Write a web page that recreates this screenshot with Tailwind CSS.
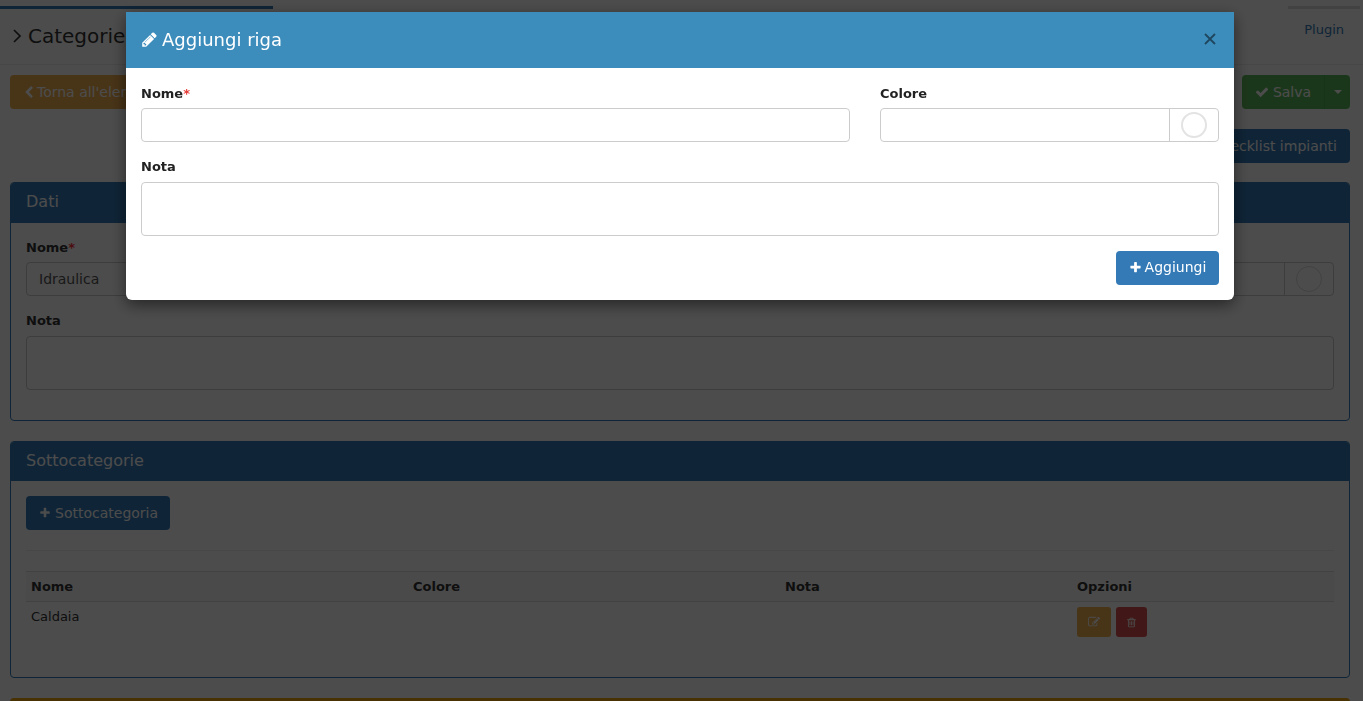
<!DOCTYPE html>
<html>

<head>
    <meta charset="UTF-8">
    <meta name="viewport" content="width=device-width, initial-scale=1.0">
    <script src="https://cdn.jsdelivr.net/npm/@tailwindcss/browser@4"></script>
</head>

<body class="h-[701px] overflow-hidden bg-white font-['DejaVu_Sans',sans-serif] text-[13px] text-[#333]">
    <!-- page behind the modal -->
    <div class="h-[701px] overflow-hidden">
        <div class="flex h-[10px] justify-between pt-[6px]">
            <div class="h-[3px] w-[273px] bg-[#337ab7]"></div>
            <div class="mr-[3px] h-[3px] w-[72px] bg-[#ddd]"></div>
        </div>
        <div class="flex h-[55px] items-center justify-between border-b border-[#eee] pl-[12px] pr-[19px]">
            <h1 class="mb-[2px] flex items-center gap-[5px] text-[20px] font-normal">
                <svg width="11" height="16" viewBox="0 0 11 16" fill="none" stroke="#333" stroke-width="1.7"><path d="M2 2l6 6-6 6" /></svg>
                Categorie
            </h1>
            <a class="mb-[14px] text-[13px] text-[#337ab7]">Plugin</a>
        </div>

        <div class="pl-[10px] pr-[13px]">
            <div class="mt-[10px] flex h-[34px] justify-between">
                <button class="flex items-center gap-[3px] rounded-[4px] bg-[#f0ad4e] pl-[13px] pr-[13px] text-[14px] text-white">
                    <svg class="h-[13px] w-[11px]" viewBox="200 0 1300 1792" fill="currentColor"><path d="M1427 301l-531 531 531 531q19 19 19 45t-19 45l-166 166q-19 19-45 19t-45-19l-742-742q-19-19-19-45t19-45l742-742q19-19 45-19t45 19l166 166q19 19 19 45t-19 45z" /></svg>
                    Torna all'elenco
                </button>
                <div class="flex h-[34px] w-[108px] rounded-[4px] bg-[#5cb85c] text-[14px] text-white">
                    <div class="flex flex-1 items-center justify-center gap-[4px] border-r border-[#4cae4c]">
                        <svg class="h-[14px] w-[14px]" viewBox="0 0 1792 1792" fill="currentColor"><path d="M1671 566q0 40-28 68l-724 724-136 136q-28 28-68 28t-68-28l-136-136-362-362q-28-28-28-68t28-68l136-136q28-28 68-28t68 28l294 295 656-657q28-28 68-28t68 28l136 136q28 28 28 68z" /></svg>
                        Salva
                    </div>
                    <div class="flex w-[25px] items-center justify-center">
                        <span class="border-x-[4px] border-t-[4px] border-x-transparent border-t-white"></span>
                    </div>
                </div>
            </div>
            <div class="mt-[20px] flex justify-end">
                <button class="h-[34px] w-[280px] rounded-[4px] bg-[#337ab7] pr-[13px] text-right text-[14px] text-white">Checklist impianti</button>
            </div>

            <section class="mt-[19px] h-[239px] rounded-[4px] border border-[#337ab7]">
                <h2 class="flex h-[40px] items-center rounded-t-[3px] bg-[#337ab7] px-[15px] pb-[2px] text-[16px] font-normal text-white">Dati</h2>
                <div class="p-[15px]">
                    <div class="grid grid-cols-[862px_416px] gap-x-[30px]">
                        <div>
                            <label class="block h-[24px] font-bold">Nome<span class="text-red-500">*</span></label>
                            <input class="h-[34px] w-full rounded-[4px] border border-[#ccc] bg-transparent px-[12px] text-[14px] text-[#555]" value="Idraulica">
                        </div>
                        <div>
                            <label class="block h-[24px] font-bold">Colore</label>
                            <div class="flex h-[34px] rounded-[4px] border border-[#ccc]">
                                <div class="flex-1 border-r border-[#ccc]"></div>
                                <div class="flex w-[48px] items-center justify-center"><span class="h-[26px] w-[26px] rounded-full border border-[#ddd]"></span></div>
                            </div>
                        </div>
                    </div>
                    <label class="mt-[15px] block h-[25px] font-bold">Nota</label>
                    <div class="h-[54px] rounded-[4px] border border-[#ccc]"></div>
                </div>
            </section>

            <section class="mt-[20px] h-[237px] rounded-[4px] border border-[#337ab7]">
                <h2 class="flex h-[39px] items-center rounded-t-[3px] bg-[#337ab7] px-[15px] pb-[2px] text-[16px] font-normal text-white">Sottocategorie</h2>
                <div class="px-[15px] pt-[15px]">
                    <button class="flex h-[34px] w-[144px] items-center gap-[4px] rounded-[4px] bg-[#337ab7] pl-[13px] text-[14px] text-white">
                        <svg class="h-[12px] w-[12px]" viewBox="0 0 1792 1792" fill="currentColor"><path d="M1600 736v192q0 40-28 68t-68 28h-416v416q0 40-28 68t-68 28h-192q-40 0-68-28t-28-68v-416h-416q-40 0-68-28t-28-68v-192q0-40 28-68t68-28h416v-416q0-40 28-68t68-28h192q40 0 68 28t28 68v416h416q40 0 68 28t28 68z" /></svg>
                        Sottocategoria
                    </button>
                    <hr class="mt-[20px] border-[#eee]">
                    <table class="mt-[20px] w-full table-fixed border-t border-[#ddd]">
                        <thead>
                            <tr class="h-[30px] border-b border-[#ddd] bg-[#f9f9f9] text-left">
                                <th class="w-[382px] px-[5px] font-bold">Nome</th>
                                <th class="w-[372px] px-[5px] font-bold">Colore</th>
                                <th class="w-[292px] px-[5px] font-bold">Nota</th>
                                <th class="px-[5px] font-bold">Opzioni</th>
                            </tr>
                        </thead>
                        <tbody>
                            <tr>
                                <td class="px-[5px] pt-[5px] align-top">Caldaia</td>
                                <td></td>
                                <td></td>
                                <td class="px-[5px] pt-[5px]">
                                    <div class="flex gap-[5px]">
                                        <button class="flex h-[30px] w-[34px] items-center justify-center rounded-[3px] bg-[#f0ad4e] text-white">
                                            <svg class="h-[12px] w-[12px]" viewBox="0 0 1792 1792" fill="currentColor"><path d="M888 1184l116-116-152-152-116 116v56h96v96h56zm440-720q-16-16-33 1l-350 350q-17 17-1 33t33-1l350-350q17-17 1-33zm80 594v190q0 119-84.5 203.5t-203.5 84.5h-832q-119 0-203.5-84.5t-84.5-203.5v-832q0-119 84.5-203.5t203.5-84.5h832q63 0 117 25 15 7 18 23 3 17-9 29l-49 49q-14 14-32 8-23-6-45-6h-832q-66 0-113 47t-47 113v832q0 66 47 113t113 47h832q66 0 113-47t47-113v-126q0-13 9-22l64-64q15-15 35-7t20 29zm-96-738l288 288-672 672h-288v-288zm444 132l-92 92-288-288 92-92q28-28 68-28t68 28l152 152q28 28 28 68t-28 68z" /></svg>
                                        </button>
                                        <button class="flex h-[30px] w-[31px] items-center justify-center rounded-[3px] bg-[#d9534f] text-white">
                                            <svg class="h-[11px] w-[11px]" viewBox="0 0 1792 1792" fill="currentColor"><path d="M704 736v576q0 14-9 23t-23 9h-64q-14 0-23-9t-9-23v-576q0-14 9-23t23-9h64q14 0 23 9t9 23zm256 0v576q0 14-9 23t-23 9h-64q-14 0-23-9t-9-23v-576q0-14 9-23t23-9h64q14 0 23 9t9 23zm256 0v576q0 14-9 23t-23 9h-64q-14 0-23-9t-9-23v-576q0-14 9-23t23-9h64q14 0 23 9t9 23zm128 724v-948h-896v948q0 22 7 40.5t14.5 27 10.5 8.5h832q3 0 10.5-8.5t14.5-27 7-40.5zm-672-1076h448l-48-117q-7-9-17-11h-317q-10 2-17 11zm928 32v64q0 14-9 23t-23 9h-96v948q0 83-47 143.5t-113 60.5h-832q-66 0-113-58.5t-47-141.5v-952h-96q-14 0-23-9t-9-23v-64q0-14 9-23t23-9h309l70-167q15-37 54-63t79-26h320q40 0 79 26t54 63l70 167h309q14 0 23 9t9 23z" /></svg>
                                        </button>
                                    </div>
                                </td>
                            </tr>
                        </tbody>
                    </table>
                </div>
            </section>

            <section class="mt-[20px] h-[40px] rounded-t-[4px] bg-[#f0a30a]"></section>
        </div>
    </div>

    <!-- modal backdrop -->
    <div class="fixed inset-0 bg-black/70"></div>

    <!-- modal -->
    <div class="fixed left-[126px] top-[12px] w-[1108px] overflow-hidden rounded-b-[6px] bg-white shadow-[0_5px_15px_rgba(0,0,0,0.5)]">
        <div class="flex h-[56px] items-center justify-between bg-[#3c8dbc] pb-[2px] pl-[15px] pr-[17px] text-white">
            <h3 class="flex items-center gap-[4px] text-[18px] font-normal">
                <svg class="h-[17px] w-[17px]" viewBox="0 0 1792 1792" fill="currentColor"><path d="M491 1536l91-91-235-235-91 91v107h128v128h107zm523-928q0-22-22-22-10 0-17 7l-542 542q-7 7-7 17 0 22 22 22 10 0 17-7l542-542q7-7 7-17zm-54-192l416 416-832 832h-416v-416zm683 96q0 53-37 90l-166 166-416-416 166-165q36-38 90-38 53 0 91 38l235 234q37 39 37 91z" /></svg>
                Aggiungi riga
            </h3>
            <svg width="14" height="14" viewBox="0 0 14 14" stroke="#000" stroke-opacity="0.5" stroke-width="1.8"><path d="M2 2l10 10M12 2L2 12" /></svg>
        </div>
        <div class="px-[15px] pb-[15px] pt-[15px]">
            <div class="grid grid-cols-[709px_339px] gap-x-[30px]">
                <div>
                    <label class="block h-[25px] pt-[1px] font-bold text-[#222]">Nome<span class="text-[#e53935]">*</span></label>
                    <input class="block h-[34px] w-full rounded-[4px] border border-[#ccc] bg-white px-[12px]">
                </div>
                <div>
                    <label class="block h-[25px] pt-[1px] font-bold text-[#222]">Colore</label>
                    <div class="flex h-[34px] rounded-[4px] border border-[#ccc] bg-white">
                        <div class="flex-1 border-r border-[#ccc]"></div>
                        <div class="flex w-[48px] items-center justify-center"><span class="h-[26px] w-[26px] rounded-full border-2 border-[#e3e3e3]"></span></div>
                    </div>
                </div>
            </div>
            <label class="mt-[15px] block h-[25px] font-bold text-[#222]">Nota</label>
            <textarea class="block h-[54px] w-full resize-none rounded-[4px] border border-[#ccc] bg-white px-[12px]"></textarea>
            <div class="mt-[15px] flex justify-end">
                <button class="flex h-[34px] w-[103px] items-center justify-center gap-[3px] rounded-[4px] bg-[#337ab7] pb-[2px] text-[14px] text-white">
                    <svg class="h-[13px] w-[13px]" viewBox="0 0 1792 1792" fill="currentColor"><path d="M1600 736v192q0 40-28 68t-68 28h-416v416q0 40-28 68t-68 28h-192q-40 0-68-28t-28-68v-416h-416q-40 0-68-28t-28-68v-192q0-40 28-68t68-28h416v-416q0-40 28-68t68-28h192q40 0 68 28t28 68v416h416q40 0 68 28t28 68z" /></svg>
                    Aggiungi
                </button>
            </div>
        </div>
    </div>
</body>

</html>
